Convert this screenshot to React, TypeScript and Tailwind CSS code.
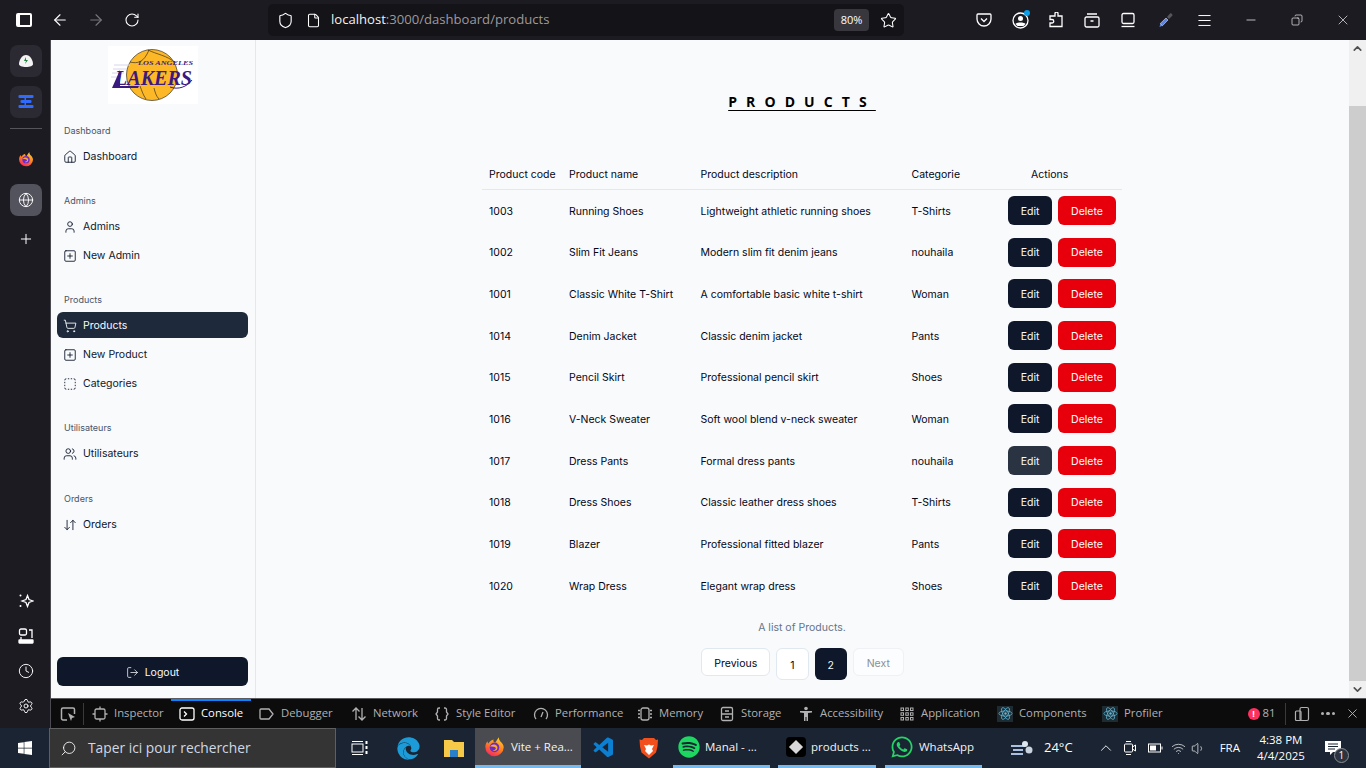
import React from 'react';
import {
  ArrowDownUp, ArrowLeft, ArrowRight, ChevronDown, ChevronUp, Clock, Copy, File, Globe, House, LogOut, Menu, Minus,
  Plus, RotateCw, Search, Settings, Shield, ShoppingCart, SquareDashed, SquarePlus, Star, User, Users, Volume1, Wifi, X,
} from 'lucide-react';
import { FaEdge, FaSpotify, FaWhatsapp, FaWindows } from 'react-icons/fa';
import { VscVscode } from 'react-icons/vsc';

const products = [
  { code: '1003', name: 'Running Shoes', desc: 'Lightweight athletic running shoes', cat: 'T-Shirts' },
  { code: '1002', name: 'Slim Fit Jeans', desc: 'Modern slim fit denim jeans', cat: 'nouhaila' },
  { code: '1001', name: 'Classic White T-Shirt', desc: 'A comfortable basic white t-shirt', cat: 'Woman' },
  { code: '1014', name: 'Denim Jacket', desc: 'Classic denim jacket', cat: 'Pants' },
  { code: '1015', name: 'Pencil Skirt', desc: 'Professional pencil skirt', cat: 'Shoes' },
  { code: '1016', name: 'V-Neck Sweater', desc: 'Soft wool blend v-neck sweater', cat: 'Woman' },
  { code: '1017', name: 'Dress Pants', desc: 'Formal dress pants', cat: 'nouhaila', hover: true },
  { code: '1018', name: 'Dress Shoes', desc: 'Classic leather dress shoes', cat: 'T-Shirts' },
  { code: '1019', name: 'Blazer', desc: 'Professional fitted blazer', cat: 'Pants' },
  { code: '1020', name: 'Wrap Dress', desc: 'Elegant wrap dress', cat: 'Shoes' },
];

const nav = [
  { label: 'Dashboard', items: [{ name: 'Dashboard', icon: House }] },
  { label: 'Admins', items: [{ name: 'Admins', icon: User }, { name: 'New Admin', icon: SquarePlus }] },
  {
    label: 'Products',
    items: [
      { name: 'Products', icon: ShoppingCart, active: true },
      { name: 'New Product', icon: SquarePlus },
      { name: 'Categories', icon: SquareDashed },
    ],
  },
  { label: 'Utilisateurs', items: [{ name: 'Utilisateurs', icon: Users }] },
  { label: 'Orders', items: [{ name: 'Orders', icon: ArrowDownUp }] },
];

const Firefox = ({ size = 16 }: { size?: number }) => (
  <svg width={size} height={size} viewBox="0 0 24 24">
    <defs>
      <linearGradient id="fx" x1="0.7" y1="0" x2="0.2" y2="1">
        <stop offset="0" stopColor="#ffd02e" />
        <stop offset="0.5" stopColor="#ff7a1f" />
        <stop offset="1" stopColor="#f5206b" />
      </linearGradient>
    </defs>
    <path d="M12 23a10.5 10.5 0 0 1-10.5-10.5C1.500 9.500 3 7 4 6c0 1 .5 2 1 2.500C6.500 6 9 4.500 11 4c-1 2 0 3 2 3.500 1-2 2.500-4 4-6 0 2 .5 3 1.500 4.500 2.500 2 4 4.500 4 7A10.500 10.500 0 0 1 12 23z" fill="url(#fx)" />
    <circle cx="12" cy="13" r="5.500" fill="#6b2bc9" />
    <path d="M7 12c1-2 4-3 6-2 2 .8 3 3 2 5-1 2-4 2.500-5 1 2 .5 3.500-.5 3.500-2s-3-2.500-6.500-2z" fill="#ffa436" />
  </svg>
);

const Brave = () => (
  <svg width="20" height="22" viewBox="0 0 20 22">
    <path d="M5 1h10l2 2 2-.5-.5 7-1.500 6L10 21.500 2.500 15.500 1 9.500.5 2.500 3 3z" fill="#f1501d" />
    <path d="M5 8l3 .5 2-1 2 1 3-.5-2 4 1 2-4 4-4-4 1-2z" fill="#fff" />
  </svg>
);

const Lakers = () => (
  <svg width="90" height="58" viewBox="0 0 90 58">
    <rect width="90" height="58" fill="#fff" />
    <circle cx="44" cy="29" r="25.500" fill="#fdb827" stroke="#3a3020" strokeWidth="0.7" />
    <path d="M22 16c8 2 14 0 19-12M40 4c8 4 20 6 26 12M32 40c2 5 3 9 6 13M46 42c1 4 2 8 5 11" fill="none" stroke="#3a3020" strokeWidth="0.7" />
    <path d="M6 19h16M5 23h14M4 27h12M3 31h10" stroke="#d9d4e8" strokeWidth="1" />
    <text x="30" y="19" textLength="55" lengthAdjust="spacingAndGlyphs" fontFamily="Liberation Serif, serif" fontWeight="700" fontStyle="italic" fontSize="6.500" fill="#3b1a80">LOS ANGELES</text>
    <text x="7" y="38.500" textLength="77" lengthAdjust="spacingAndGlyphs" fontFamily="Liberation Serif, serif" fontWeight="700" fontStyle="italic" fontSize="20" fill="#3b1a80">LAKERS</text>
    <path d="M12 24L4 42h26l1-2H12z" fill="#3b1a80" />
    <path d="M62 41c8 3 17 0 22-7" fill="none" stroke="#3b1a80" strokeWidth="1" />
  </svg>
);

const TopBar = () => {
  const cell = 'w-9 h-10 flex items-center justify-center shrink-0';
  return (
    <div className="h-10 bg-[#1c1b22] flex items-center text-white shrink-0">
      <div className="w-1.5 shrink-0" />
      <div className={cell}>
        <div className="w-[16px] h-[14px] border-2 border-white rounded-[2px] bg-[#1c1b22] border-l-[4px]" />
      </div>
      <div className={cell}><ArrowLeft size={18} strokeWidth={1.5} /></div>
      <div className={cell}><ArrowRight size={18} strokeWidth={1.5} className="text-[#77767c]" /></div>
      <div className={cell}><RotateCw size={16} strokeWidth={1.6} /></div>
      <div className="ml-[118px] w-[636px] h-8 bg-[#141318] rounded-[5px] flex items-center shrink-0">
        <Shield size={17} strokeWidth={1.6} className="ml-[9px] shrink-0" />
        <File size={15} strokeWidth={1.7} className="ml-[12px] shrink-0" />
        <span className="ml-[10px] font-['Open_Sans',sans-serif] text-[13.1px] text-[#f2f2f3]">
          localhost<span className="text-[#9b9a9f]">:3000/dashboard/products</span>
        </span>
        <span className="ml-auto w-[35px] h-[22px] rounded-[4px] bg-[#38373e] text-[11px] font-['Open_Sans',sans-serif] flex items-center justify-center">80%</span>
        <Star size={17} strokeWidth={1.5} className="ml-[11px] mr-[7px]" />
      </div>
      <div className="w-[62px] shrink-0" />
      <div className={cell}>
        <svg width="16" height="16" viewBox="0 0 16 16" fill="none" stroke="#fff" strokeWidth="1.300"><path d="M2 2h12a1 1 0 0 1 1 1v4a7 7 0 0 1-14 0V3a1 1 0 0 1 1-1z" /><path d="M5 6.500l3 3 3-3" /></svg>
      </div>
      <div className={`${cell} relative`}>
        <svg width="17" height="17" viewBox="0 0 17 17"><circle cx="8.500" cy="8.500" r="7.500" fill="none" stroke="#fff" strokeWidth="1.300" /><circle cx="8.500" cy="6.500" r="2.500" fill="#fff" /><path d="M3.500 12c1-2 9-2 10 0l-2 2h-6z" fill="#fff" /></svg>
        <span className="absolute top-[10px] right-[8px] w-[6px] h-[6px] rounded-full bg-[#0a9fe8]" />
      </div>
      <div className={cell}>
        <svg width="16" height="16" viewBox="0 0 16 16" fill="none" stroke="#fff" strokeWidth="1.300"><path d="M7 1.500a1.500 1.500 0 0 1 3 0V4h4v10.500H2V11h2a1.500 1.500 0 0 0 0-3.500H2V4h5z" /></svg>
      </div>
      <div className={cell}>
        <svg width="16" height="16" viewBox="0 0 16 16" fill="none" stroke="#fff" strokeWidth="1.300"><rect x="1" y="5" width="14" height="10" rx="1.500" /><path d="M3 2h10M6.500 9h3" /></svg>
      </div>
      <div className={cell}>
        <svg width="16" height="16" viewBox="0 0 16 16" fill="none" stroke="#fff" strokeWidth="1.300"><rect x="2" y="1.500" width="12" height="10" rx="1.500" /><path d="M1.500 14.500h13" /></svg>
      </div>
      <div className="w-0.5 shrink-0" />
      <div className={cell}>
        <svg width="16" height="16" viewBox="0 0 16 16"><path d="M1.500 15l.8-3.500L8 6l2 2-5.500 5.700z" fill="#5f83dc" /><path d="M2.300 11.500L8 6l2 2-5.500 5.700z" fill="none" stroke="#d8d8dc" strokeWidth="0.600" /><path d="M9 5l3-3.500c1-.8 3 1 2.300 2.300L11 7z" fill="#55555c" /></svg>
      </div>
      <div className="w-0.5 shrink-0" />
      <div className={cell}><Menu size={17} strokeWidth={1.4} /></div>
      <div className="w-1.5 shrink-0" />
      <div className="w-[46px] flex justify-center shrink-0"><Minus size={14} strokeWidth={1.2} /></div>
      <div className="w-[46px] flex justify-center shrink-0"><Copy size={12} strokeWidth={1.3} className="-scale-x-100" /></div>
      <div className="w-[46px] flex justify-center shrink-0"><X size={16} strokeWidth={1} /></div>
    </div>
  );
};

const Rail = () => {
  const tile = 'w-8 h-8 rounded-lg flex items-center justify-center shrink-0';
  return (
    <div className="w-[51px] bg-[#1c1b22] border-r border-[#4b4a50] flex flex-col items-center pl-[2px] pt-[5px] pb-[14px] shrink-0 text-white">
      <div className={`${tile} bg-[#2b2a33]`}>
        <svg width="16" height="16" viewBox="0 0 16 16"><path d="M1 11c0-4 3-9 7-9s7 5 7 9c0 2-3 3-7 3s-7-1-7-3z" fill="#f3f3f3" /><path d="M8 4L6 8h2l-1 3 3-4H8z" fill="#16833a" /></svg>
      </div>
      <div className={`${tile} bg-[#2b2a33] mt-[9px]`}>
        <svg width="16" height="16" viewBox="0 0 16 16" fill="#2f6bff"><rect x="0.500" y="1" width="15" height="3" rx="1" /><rect x="2.500" y="6" width="11" height="3" rx="1" /><rect x="0.500" y="11" width="15" height="3" rx="1" /><rect x="6.500" y="1" width="1.500" height="13" /></svg>
      </div>
      <div className="w-8 h-px bg-[#55545a] mt-[10px]" />
      <div className="mt-[22px]"><Firefox /></div>
      <div className={`${tile} bg-[#53535d] mt-[17px]`}><Globe size={16} strokeWidth={1.4} /></div>
      <Plus size={16} strokeWidth={1.5} className="mt-[15px]" />
      <div className="mt-auto flex flex-col items-center gap-[19px]">
        <svg width="16" height="16" viewBox="0 0 16 16" fill="none" stroke="#fff" strokeWidth="1.300"><path d="M9.500 2.500l1.500 4 4 1.500-4 1.500-1.500 4-1.500-4-4-1.500 4-1.500z" /><circle cx="2.500" cy="2.500" r="1" fill="#fff" stroke="none" /><circle cx="2.500" cy="13" r="1" fill="#fff" stroke="none" /></svg>
        <svg width="16" height="16" viewBox="0 0 16 16" fill="none" stroke="#fff" strokeWidth="1.300"><rect x="1.500" y="1" width="7" height="6" rx="1.500" /><path d="M11 2h3v8M3 9v3" /><rect x="1" y="12" width="14" height="3" rx="0.500" fill="#fff" /></svg>
        <Clock size={16} strokeWidth={1.4} />
        <Settings size={16} strokeWidth={1.4} />
      </div>
    </div>
  );
};

const Sidebar = () => (
  <aside className="w-[205px] h-full border-r border-[#e2e8f0] bg-[#f8fafc] flex flex-col px-1.5 shrink-0">
    <div className="pt-1.5 pl-[51px] h-[64px] shrink-0"><Lakers /></div>
    <div className="mt-[15px] flex flex-col gap-5">
      {nav.map((group) => (
        <div key={group.label} className="last:mt-px">
          <div className="h-6 pl-[7px] flex items-center text-[9px] text-[#475569]">{group.label}</div>
          <div className="flex flex-col gap-[3px]">
            {group.items.map((item) => (
              <div
                key={item.name}
                className={`h-[26px] w-[191px] rounded-md flex items-center gap-[6px] pl-[6px] pt-px text-[10.5px] ${
                  item.active ? 'bg-[#1e293b] text-[#f8fafc]' : 'text-[#0f172a]'
                }`}
              >
                <item.icon size={14} strokeWidth={1.5} />
                {item.name}
              </div>
            ))}
          </div>
        </div>
      ))}
    </div>
    <button className="mt-auto mb-3 h-[29px] w-[191px] rounded-md bg-[#0f172a] text-[#f8fafc] text-[10.5px] flex items-center justify-center gap-[6px] pt-[2px]">
      <LogOut size={13} strokeWidth={1.4} />
      Logout
    </button>
  </aside>
);

const Main = () => (
  <main className="flex-1 h-full bg-[#f9fafc] flex flex-col items-center text-[10.5px] text-[#020617] pr-px">
    <h1 className="mt-[52px] font-['Open_Sans',sans-serif] font-bold text-[14px] leading-[20px] tracking-[9.1px] underline underline-offset-[3px] text-black">
      PRODUCTS
    </h1>
    <table className="mt-[46px] w-[640px] table-fixed border-collapse">
      <colgroup>
        <col className="w-[80px]" />
        <col className="w-[131.5px]" />
        <col className="w-[211px]" />
        <col className="w-[96.5px]" />
        <col className="w-[121px]" />
      </colgroup>
      <thead>
        <tr className="h-[31.5px] border-b border-[#e2e8f0] text-left">
          <th className="pl-[7px] pt-[2px] font-normal">Product code</th>
          <th className="pl-[7px] pt-[2px] font-normal">Product name</th>
          <th className="pl-[7px] pt-[2px] font-normal">Product description</th>
          <th className="pl-[7px] pt-[2px] font-normal">Categorie</th>
          <th className="pl-[30px] pt-[2px] font-normal">Actions</th>
        </tr>
      </thead>
      <tbody>
        {products.map((p) => (
          <tr key={p.code} className="h-[41.7px]">
            <td className="pl-[7px] pt-[2px]">{p.code}</td>
            <td className="pl-[7px] pt-[2px]">{p.name}</td>
            <td className="pl-[7px] pt-[2px]">{p.desc}</td>
            <td className="pl-[7px] pt-[2px]">{p.cat}</td>
            <td className="pl-[7px]">
              <div className="flex gap-1.5">
                <button className={`w-[44px] h-[29px] pt-[2px] rounded-md text-[#f8fafc] ${p.hover ? 'bg-[#2a3342]' : 'bg-[#0f172a]'}`}>Edit</button>
                <button className="w-[58px] h-[29px] pt-[2px] rounded-md bg-[#e7000b] text-white">Delete</button>
              </div>
            </td>
          </tr>
        ))}
      </tbody>
      <caption className="caption-bottom pt-[14px] text-[#64748b] leading-4">A list of Products.</caption>
    </table>
    <div className="mt-[12px] flex items-start gap-1.5 pl-px">
      <button className="w-[69px] h-[28px] pt-[2px] rounded-md border border-[#e2e8f0] bg-white">Previous</button>
      <button className="w-[32.5px] h-[32px] pt-[2px] rounded-md border border-[#e2e8f0] bg-white">1</button>
      <button className="w-[32px] h-[32px] pt-[2px] rounded-md bg-[#0f172a] text-[#f8fafc]">2</button>
      <button className="w-[51px] h-[28px] pt-[2px] rounded-md border border-[#eef1f5] bg-[#fcfdfe] text-[#8b8f96]">Next</button>
    </div>
  </main>
);

const Scrollbar = () => (
  <div className="w-[17px] h-full bg-[#f0f0f0] flex flex-col shrink-0">
    <div className="h-[17px] flex items-center justify-center"><ChevronUp size={13} strokeWidth={3} className="text-[#505050]" /></div>
    <div className="h-[49px]" />
    <div className="flex-1 bg-[#cdcdcd]" />
    <div className="h-[17px] flex items-center justify-center"><ChevronDown size={13} strokeWidth={3} className="text-[#505050]" /></div>
  </div>
);

const ReactGlyph = () => (
  <span className="w-4 h-4 bg-[#1d2b33] flex items-center justify-center">
    <svg width="15" height="15" viewBox="0 0 16 16" fill="none" stroke="#61b8d8" strokeWidth="0.800">
      <ellipse cx="8" cy="8" rx="7" ry="2.800" />
      <ellipse cx="8" cy="8" rx="7" ry="2.800" transform="rotate(60 8 8)" />
      <ellipse cx="8" cy="8" rx="7" ry="2.800" transform="rotate(120 8 8)" />
      <circle cx="8" cy="8" r="1.300" fill="#61b8d8" stroke="none" />
    </svg>
  </span>
);

const dt = { width: 16, height: 16, viewBox: '0 0 16 16', fill: 'none', stroke: 'currentColor', strokeWidth: 1.3 };

const tools = [
  { name: 'Inspector', w: 'w-[87px]', icon: <svg {...dt}><rect x="3" y="3" width="10" height="10" rx="1.500" /><path d="M8 0.500V3M8 13v2.500M0.500 8H3M13 8h2.500" /></svg> },
  { name: 'Console', w: 'w-[80px]', active: true, icon: <svg {...dt}><rect x="1" y="2" width="14" height="12" rx="2" /><path d="M5 5.500L7.500 8 5 10.500" /></svg> },
  { name: 'Debugger', w: 'w-[92px]', icon: <svg {...dt}><path d="M2 3h8l4 5-4 5H2a1 1 0 0 1-1-1V4a1 1 0 0 1 1-1z" /></svg> },
  { name: 'Network', w: 'w-[83px]', icon: <svg {...dt}><path d="M5 14V2M1.500 5.500L5 2l3.500 3.500M11 2v12M7.500 10.500L11 14l3.500-3.500" /></svg> },
  { name: 'Style Editor', w: 'w-[99px]', icon: <svg {...dt}><path d="M6 2H5a1.500 1.500 0 0 0-1.500 1.500V6L2 8l1.500 2v2.500A1.500 1.500 0 0 0 5 14h1M10 2h1a1.500 1.500 0 0 1 1.500 1.500V6L14 8l-1.500 2v2.500A1.500 1.500 0 0 1 11 14h-1" /></svg> },
  { name: 'Performance', w: 'w-[104px]', icon: <svg {...dt}><path d="M3 13A6.500 6.500 0 1 1 13 13M8 11l2-5" /></svg> },
  { name: 'Memory', w: 'w-[82px]', icon: <svg {...dt}><rect x="4" y="2" width="8" height="12" rx="2" /><path d="M1 4.500h2M1 8h2M1 11.500h2M13 4.500h2M13 8h2M13 11.500h2" /></svg> },
  { name: 'Storage', w: 'w-[79px]', icon: <svg {...dt}><rect x="2.500" y="1.500" width="11" height="13" rx="1.500" /><path d="M2.500 8h11M6 5h4M6 11h4" /></svg> },
  { name: 'Accessibility', w: 'w-[101px]', icon: <svg width="16" height="16" viewBox="0 0 16 16" fill="currentColor"><circle cx="8" cy="2.500" r="1.800" /><path d="M2 5h12v1.500l-4 .5v8H8.500v-4h-1v4H6V7l-4-.5z" /></svg> },
  { name: 'Application', w: 'w-[98px]', icon: <svg {...dt} strokeWidth={1}><rect x="2" y="2" width="2.500" height="2.500" /><rect x="6.800" y="2" width="2.500" height="2.500" /><rect x="11.500" y="2" width="2.500" height="2.500" /><rect x="2" y="6.800" width="2.500" height="2.500" /><rect x="6.800" y="6.800" width="2.500" height="2.500" /><rect x="11.500" y="6.800" width="2.500" height="2.500" /><rect x="2" y="11.500" width="2.500" height="2.500" /><rect x="6.800" y="11.500" width="2.500" height="2.500" /><rect x="11.500" y="11.500" width="2.500" height="2.500" /></svg> },
  { name: 'Components', w: 'w-[105px]', icon: <ReactGlyph /> },
  { name: 'Profiler', w: 'w-[80px]', icon: <ReactGlyph /> },
];

const DevTools = () => (
  <div className="h-[30px] bg-[#0c0c0d] border-t border-[#5b5b5f] flex items-center text-[#b1b1b3] font-['Open_Sans',sans-serif] text-[11.3px] shrink-0">
    <div className="w-8 flex justify-center shrink-0 text-[#b1b1b3] pl-[2px]">
      <svg width="17" height="16" viewBox="0 0 17 16" fill="none" stroke="currentColor" strokeWidth="1.500"><path d="M7 14H3a1.500 1.500 0 0 1-1.500-1.500v-9A1.500 1.500 0 0 1 3 2h10a1.500 1.500 0 0 1 1.500 1.500V8" /><path d="M8 7l7 4-3 1-1 3z" fill="currentColor" stroke="none" /></svg>
    </div>
    <div className="w-px h-[22px] bg-[#3a3a3d] shrink-0" />
    {tools.map((t) => (
      <div
        key={t.name}
        className={`h-full flex items-center gap-[6px] pl-2 shrink-0 ${t.w} ${
          t.active ? 'text-white shadow-[inset_0_2px_0_#0a84ff]' : ''
        }`}
      >
        {t.icon}
        {t.name}
      </div>
    ))}
    <div className="ml-auto flex items-center h-full pr-[6px]">
      <span className="w-3 h-3 rounded-full bg-[#ff2f5e] text-white text-[9px] font-bold flex items-center justify-center">!</span>
      <span className="ml-[3px]">81</span>
      <div className="w-px h-[22px] bg-[#3a3a3d] ml-[9px]" />
      <svg className="ml-[8px]" width="16" height="16" viewBox="0 0 16 16" fill="none" stroke="currentColor" strokeWidth="1.200"><rect x="6" y="1.500" width="8.500" height="13" rx="1.500" /><rect x="1.500" y="5" width="5.500" height="9.500" rx="1" /></svg>
      <span className="ml-[11px] flex gap-[2px]">
        <span className="w-[3.500px] h-[3.500px] rounded-full bg-current" />
        <span className="w-[3.500px] h-[3.500px] rounded-full bg-current" />
        <span className="w-[3.500px] h-[3.500px] rounded-full bg-current" />
      </span>
      <X size={15} strokeWidth={1.5} className="ml-[10px]" />
    </div>
  </div>
);

const TaskTab = ({ icon, label, className }: { icon: React.ReactNode; label: string; className: string }) => (
  <div className={`h-full flex items-center gap-[5px] border-b-[3px] border-[#76b9ed] shrink-0 text-[#f3f3f3] ${className}`}>
    {icon}
    <span>{label}</span>
  </div>
);

const Taskbar = () => (
  <div className="h-10 bg-[#1a2433] flex items-center font-['Open_Sans',sans-serif] text-[11.5px] text-white shrink-0">
    <div className="w-[49px] flex justify-center shrink-0"><FaWindows size={16} /></div>
    <div className="w-[287px] h-full bg-[#343434] border border-[#5f5f5f] flex items-center gap-[11px] pl-[10px] text-[13.8px] text-[#cfd8e3] shrink-0">
      <Search size={17} strokeWidth={1.2} className="-scale-x-100 text-white" />
      Taper ici pour rechercher
    </div>
    <div className="w-12 flex justify-center shrink-0">
      <svg width="18" height="16" viewBox="0 0 18 16" fill="none" stroke="#fff" strokeWidth="1"><path d="M1 1.500h11M1 14.500h11" /><rect x="1" y="4" width="11" height="8" /><path d="M15.500 1v3M15.500 6v3M15.500 11v3" strokeWidth="2" /></svg>
    </div>
    <div className="w-12 flex justify-center shrink-0"><FaEdge size={23} className="text-[#1d9bd8]" /></div>
    <div className="w-[43px] flex justify-center shrink-0">
      <svg width="22" height="19" viewBox="0 0 22 19"><path d="M1 1h8l2 2h10v15H1z" fill="#f7c948" /><rect x="7" y="11" width="8" height="7" fill="#2a7fc9" /></svg>
    </div>
    <div className="w-[106px] h-full flex items-center gap-[6px] pl-[9px] bg-[#4a4b50] border-b-[3px] border-[#76b9ed] shrink-0 text-[#f3f3f3]">
      <Firefox size={21} />
      Vite + Rea...
    </div>
    <div className="w-[45px] flex justify-center shrink-0"><VscVscode size={24} className="text-[#0c7fd1]" /></div>
    <div className="w-[45px] flex justify-center shrink-0"><Brave /></div>
    <TaskTab className="w-[97px] ml-0.5 pl-[5px]" icon={<FaSpotify size={22} className="text-[#1ed760]" />} label="Manal - ..." />
    <TaskTab
      className="w-[98px] ml-2 pl-[8px]"
      icon={<span className="w-[20px] h-[20px] bg-black rounded-[4px] flex items-center justify-center"><span className="w-[10px] h-[10px] bg-[#d8d8d8] rotate-45" /></span>}
      label="products ..."
    />
    <TaskTab className="w-[97px] ml-[9px] pl-[5px]" icon={<FaWhatsapp size={24} className="text-[#25d366]" />} label="WhatsApp" />
    <div className="ml-[28px] shrink-0">
      <svg width="24" height="18" viewBox="0 0 24 18" fill="none" stroke="#a9c0e0" strokeWidth="2"><path d="M1 7h14M3 11h10M1 15h12" /><circle cx="19" cy="11" r="3.500" fill="#c9d3e0" stroke="none" /><circle cx="15" cy="5" r="3" fill="#dfe5ec" stroke="none" /></svg>
    </div>
    <span className="ml-[10px] text-[13px] shrink-0">24°C</span>
    <ChevronUp size={18} strokeWidth={1.2} className="ml-[24px] shrink-0" />
    <svg className="ml-[8px] shrink-0" width="14" height="18" viewBox="0 0 14 18" fill="none" stroke="#fff" strokeWidth="1"><rect x="1.500" y="5" width="8" height="8" rx="1" /><path d="M9.500 8l3-2v6l-3-2M3 2.500h5M3 15.500h5" /></svg>
    <svg className="ml-[11px] shrink-0" width="15" height="10" viewBox="0 0 15 10" fill="none" stroke="#fff"><rect x="0.500" y="1" width="12" height="8" /><rect x="2" y="2.500" width="6" height="5" fill="#fff" stroke="none" /><path d="M14 3.500v3" /></svg>
    <Wifi size={15} strokeWidth={1.1} className="ml-[8px] shrink-0" />
    <Volume1 size={15} strokeWidth={1.1} className="ml-[5px] shrink-0" />
    <span className="ml-[14px] shrink-0">FRA</span>
    <div className="ml-[16px] w-[50px] flex flex-col items-center leading-[16px] shrink-0">
      <span>4:38 PM</span>
      <span>4/4/2025</span>
    </div>
    <div className="ml-[19px] relative shrink-0">
      <svg width="17" height="15" viewBox="0 0 17 15"><path d="M0 0h16v11H8l-3 3v-3H0z" fill="#fff" /><path d="M3 3h10M3 5.500h10M3 8h7" stroke="#1a2433" /></svg>
      <span className="absolute -right-[7px] -bottom-[7px] w-[15px] h-[15px] rounded-full bg-[#2c3440] border border-[#8b8f96] text-[10px] flex items-center justify-center">1</span>
    </div>
  </div>
);

export default function App() {
  return (
    <div className="w-[1366px] h-[768px] overflow-hidden flex flex-col font-['Inter',sans-serif]">
      <TopBar />
      <div className="flex-1 min-h-0 flex">
        <Rail />
        <div className="flex-1 min-w-0 flex flex-col">
          <div className="flex-1 min-h-0 flex">
            <Sidebar />
            <Main />
            <Scrollbar />
          </div>
          <DevTools />
        </div>
      </div>
      <Taskbar />
    </div>
  );
}
